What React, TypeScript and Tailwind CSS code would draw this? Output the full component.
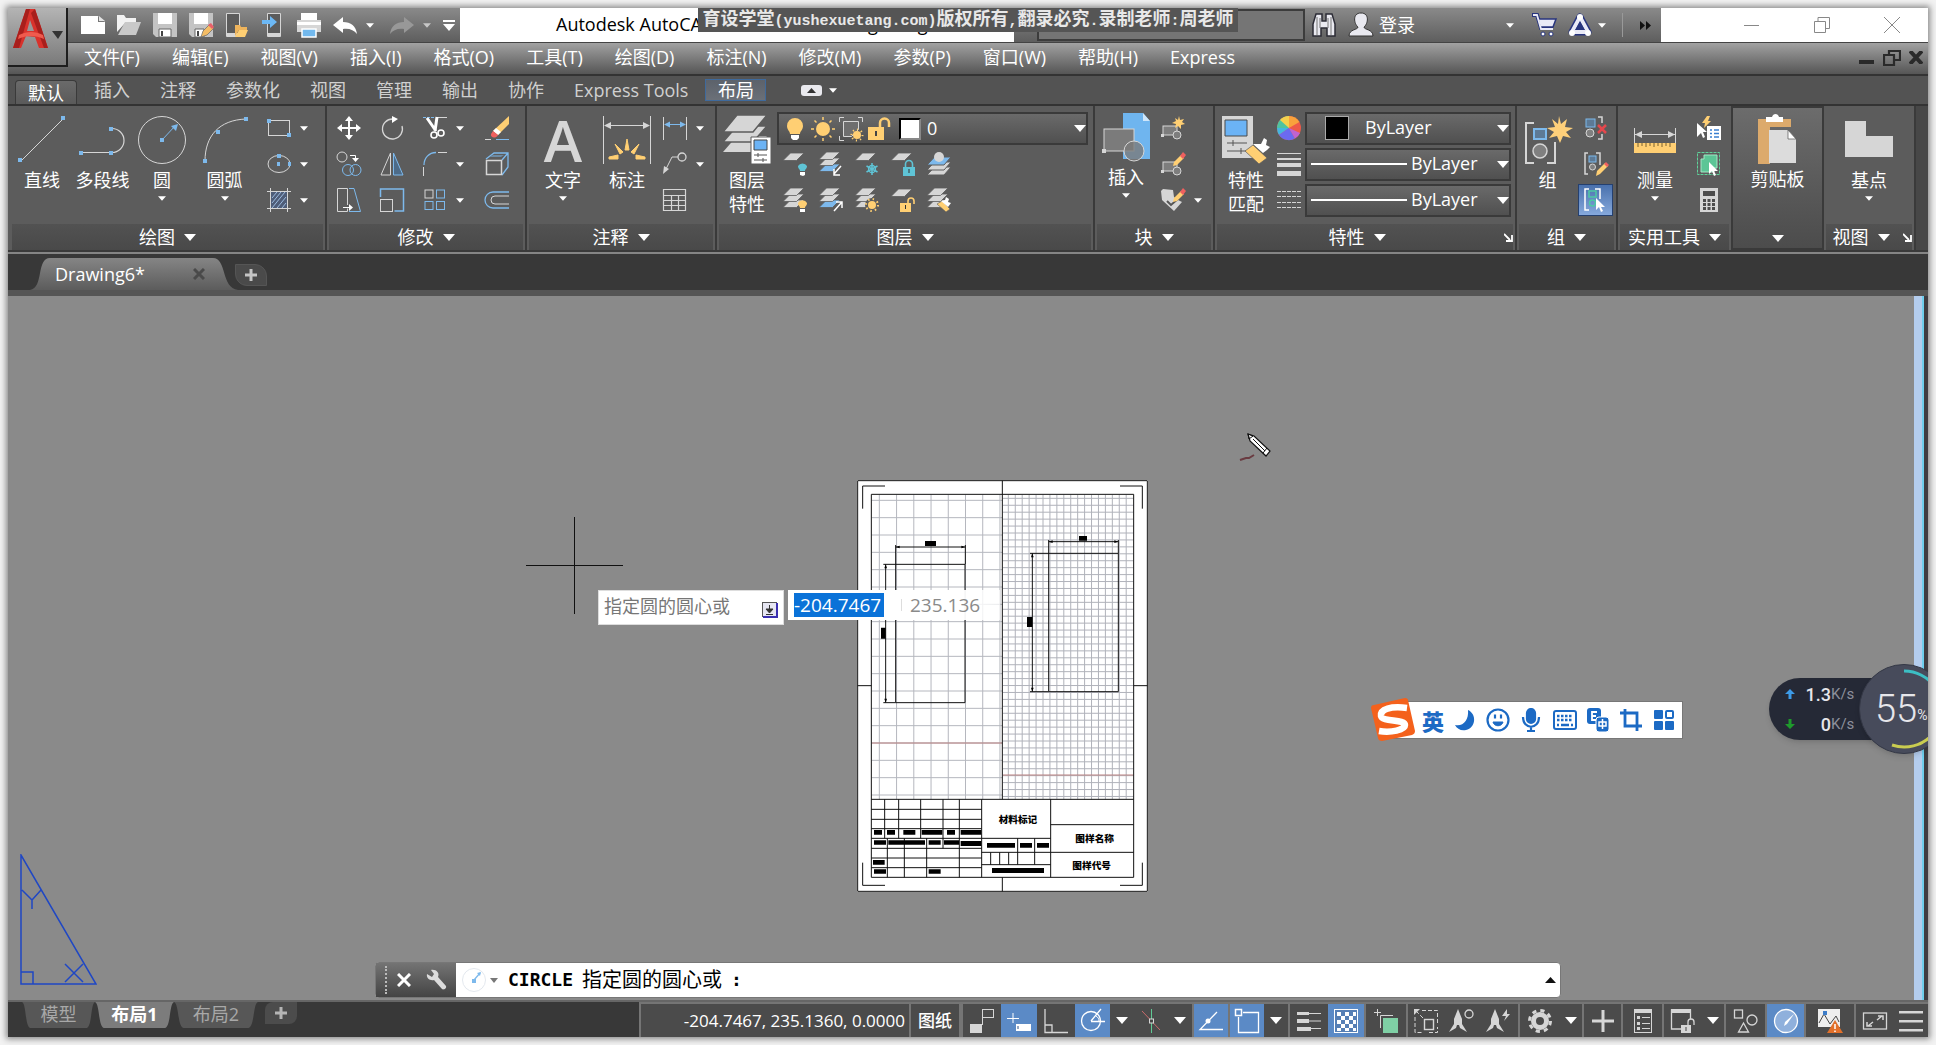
import React from 'react';

const G = '#d6d6d6';
const B = '#7db9ec';
const Y = '#ffcf73';

const sheet = (y: number, fill: string) => <path d={`M7.500 ${y}H21l-7.500 7.500H0z`} fill={fill} stroke="#5c5c5c" strokeWidth=".8" />;
const layers = <>{sheet(12, G)}{sheet(6, G)}{sheet(0, G)}</>;
const pencil = <><path d="M12 14l1-4 7-7 3 3-7 7z" fill={Y} /><path d="M19 4l3-4 3 3-3 4z" fill="#f0605f" /></>;
const cursor = <path d="M12 10v12l3-3 2 5 2-1-2-4h4z" fill="#fff" />;
const blockShape = (
  <>
    <rect x="2" y="10" width="14" height="9" fill="#7d7d7d" stroke={G} />
    <circle cx="16" cy="19" r="4" fill="#7d7d7d" stroke={G} />
    <rect x="0" y="18" width="3" height="3" fill={G} />
  </>
);

// 24x24 drawings, keyed by command
const ICONS: Record<string, React.ReactNode> = {
  rect: <><rect x="1.500" y="4.500" width="21" height="15" fill="none" stroke={G} /><path d="M0 3h4v4H0zM20 17h4v4h-4z" fill={B} /></>,
  ellipse: <><ellipse cx="12" cy="12" rx="11" ry="8.500" fill="none" stroke={G} /><path d="M10 2h4v4h-4zM21 10h3v4h-3zM10 10h3v4h-3z" fill={B} /></>,
  hatch: <><path d="M3 3h18v18H3z" fill="#4f5d78" /><path d="M5 10l5-6M5 15l9-11M5 20L18 4M10 20l9-11M15 20l4-5" stroke="#9dbce0" fill="none" /><path d="M0 3.500h24M0 20.500h24M3.500 0v24M20.500 0v24" stroke={G} /></>,
  move: <path d="M12 0l4 5h-3v6h6V8l5 4-5 4v-3h-6v6h3l-4 5-4-5h3v-6H5v3l-5-4 5-4v3h6V5H8z" fill="#fff" />,
  rotate: <><path d="M13 3a10 10 0 1 0 9 7" fill="none" stroke={G} strokeWidth="1.300" /><path d="M12 0l6 3-6 4z" fill="#fff" /></>,
  trim: <><path d="M0 1.500h11" stroke={B} strokeDasharray="3 1" /><path d="M13 1.500h11" stroke={G} /><path d="M4 2l9 13M14 1l-2 14" stroke="#fff" strokeWidth="3" /><circle cx="11" cy="19" r="3" fill="none" stroke="#fff" strokeWidth="1.600" /><circle cx="18" cy="17" r="3" fill="none" stroke="#fff" strokeWidth="1.600" /></>,
  erase: <><path d="M24 0v8L13 19l-5-4z" fill={Y} /><path d="M11 12l5 4-3 3-5-4z" fill="#fff" /><path d="M8 15l5 4c-2 4-8 3-7-1z" fill="#f0605f" /><path d="M0 23.500h6" stroke={G} /><path d="M11 23.500h13" stroke={B} /></>,
  copy: <><circle cx="5" cy="5" r="5" fill="none" stroke={G} /><path d="M13 3.500h5.500V8" fill="none" stroke="#fff" /><path d="M15 6h7l-3.500 4z" fill="#fff" /><circle cx="11" cy="18" r="5.500" fill="none" stroke={B} /><circle cx="18.500" cy="18" r="5.500" fill="none" stroke={B} /></>,
  mirror: <><path d="M10.500 1v22H1z" fill="none" stroke={G} /><path d="M13.500 1v22H23z" fill="#4d6b88" stroke={B} /></>,
  fillet: <><path d="M1 13C1 6 6 .5 13 .5" fill="none" stroke={B} strokeWidth="1.300" /><path d="M15 .5h9M.5 15v9" stroke={G} /></>,
  solid: <><path d="M1 7l8-6h14v14l-6 8M17 8l6-7" fill="none" stroke={B} strokeWidth="1.300" /><path d="M5 5l3-2h11l-3 2z" fill={B} opacity=".5" /><rect x="1.500" y="8.500" width="15" height="14" fill="none" stroke={G} strokeWidth="1.500" /></>,
  stretch: <><path d="M10.500 17v-16.500H.5v23h10v-3" fill="none" stroke={G} /><path d="M12 .5h5l6.500 23H12" fill="none" stroke={B} /><path d="M6 19h6v-3l4 3.500-4 3.500v-3H6z" fill="#fff" /></>,
  scale: <><path d="M.5 9V1h23v22h-9" fill="none" stroke={B} strokeWidth="1.500" /><rect x=".5" y="11.500" width="12" height="12" fill="none" stroke={G} /></>,
  array: <><rect x="2" y="2" width="8" height="8" fill="none" stroke={G} /><rect x="13.500" y="2" width="8" height="8" fill="none" stroke={B} /><rect x="2" y="13.500" width="8" height="8" fill="none" stroke={B} /><rect x="13.500" y="13.500" width="8" height="8" fill="none" stroke={B} /></>,
  offset: <><path d="M24 4H8a8 8 0 0 0 0 16h16" fill="none" stroke={B} strokeWidth="1.300" /><path d="M24 8H10a4 4 0 0 0 0 8h14" fill="none" stroke={G} /></>,
  dimlin: <><path d="M.5 1v23M23.500 1v23" stroke={G} /><path d="M2 8.500h20" stroke={B} /><path d="M1 8.500l6-3v6zM23 8.500l-6-3v6z" fill={B} /></>,
  leader: <><circle cx="19" cy="5" r="4" fill="none" stroke={G} strokeWidth="1.300" /><path d="M15 5H9L3 17" fill="none" stroke={G} /><path d="M0 22l1-8 5 3z" fill={G} /></>,
  table: <><path d="M.5 1.500h22v21H.5zM.5 7.500h22M.5 12.500h22M.5 17.500h22M8.500 7v15M15.500 7v15" fill="none" stroke={G} strokeWidth="1.200" /></>,
  layOff: <>{sheet(1, G)}<path d="M15 14a5 4.500 0 0 1 9 0c0 3-2 3-2 5h-5c0-2-2-2-2-5z" fill="#5fc4d6" /><path d="M17 20h5v3l-2 1-3-1z" fill="#fff" /></>,
  layIso: <>{sheet(12, B)}{sheet(6, G)}{sheet(0, G)}<path d="M22 14l-7 8m0-5v6h6" stroke="#fff" fill="none" strokeWidth="1.500" /></>,
  layFreeze: <>{sheet(1, G)}<path d="M17 11v12M11.500 14l11 6M22.500 14l-11 6" stroke="#5fc4d6" strokeWidth="1.500" /><circle cx="17" cy="17" r="3.500" fill="none" stroke="#5fc4d6" strokeWidth="1.300" /></>,
  layLock: <>{sheet(1, G)}<rect x="12" y="15" width="12" height="9" fill="#5fc4d6" /><path d="M14.500 15v-3a3.500 3.500 0 0 1 7 0v3" fill="none" stroke="#5fc4d6" strokeWidth="1.600" /><path d="M17.500 17h1v4h-1z" fill="#333" /></>,
  layCur: <><path d="M7.500 15H24l-7 8H0z" fill={G} stroke="#5c5c5c" /><path d="M7.500 10H24l-7 8H0z" fill={G} stroke="#5c5c5c" /><path d="M7.500 5H24l-7 8H0z" fill={B} stroke="#5c5c5c" /><circle cx="12" cy="5" r="5" fill={G} /></>,
  layOn: <>{layers}<path d="M15 15a5 5 0 0 1 9 0c0 3-2 3-2 5h-5c0-2-2-2-2-5z" fill={Y} /><path d="M17 21h5v3h-5z" fill="#fff" /></>,
  layUniso: <>{sheet(12, B)}{sheet(6, G)}{sheet(0, G)}<path d="M15 23l8-9m-6 0h6v6" stroke="#fff" fill="none" strokeWidth="1.500" /></>,
  layThaw: <>{layers}<circle cx="17" cy="17" r="7" fill="#5c5c5c" /><circle cx="17" cy="17" r="4" fill={Y} /><circle cx="17" cy="17" r="6" fill="none" stroke={Y} strokeWidth="2" strokeDasharray="1.500 3.200" /></>,
  layUnlock: <>{sheet(1, G)}<rect x="9" y="15" width="11" height="9" fill={Y} /><path d="M17 15v-2a3 3 0 0 1 6 0v3" fill="none" stroke={Y} strokeWidth="1.600" /><path d="M14 17h1v4h-1z" fill="#333" /></>,
  layMatch: <>{layers}<path d="M10 16l5-3 8 8-4 3z" fill={Y} stroke="#5c5c5c" strokeWidth=".6" /><path d="M14 13l4-1 1-3 3 2-1 3 3 1-3 4z" fill="#fff" /></>,
  bulb: <><path d="M4 9a8 8 0 0 1 16 0c0 4-3 5-3 8H7c0-3-3-4-3-8z" fill={Y} /><path d="M8 18h8v3l-2 2h-4l-2-2z" fill="#fff" /></>,
  sun: <><circle cx="12" cy="12" r="7" fill={Y} /><path d="M12 0v3M12 21v3M0 12h3M21 12h3M3.500 3.500l2 2M18.500 18.500l2 2M3.500 20.500l2-2M18.500 5.500l2-2" stroke={Y} strokeWidth="1.500" /></>,
  vpsun: <><path d="M4.500 4.500h15v8l-7 7h-8z" fill="#6e6e6e" stroke={G} /><path d="M.5 5V.5H5M19 .5h4.500V5M.5 19v4.500H5" fill="none" stroke={G} /><circle cx="18" cy="18" r="4" fill={Y} /><circle cx="18" cy="18" r="5.500" fill="none" stroke={Y} strokeWidth="2" strokeDasharray="1.200 3" /></>,
  unlock: <><rect x="1" y="10" width="16" height="13" fill={Y} /><path d="M13 10V6a4.500 4.500 0 0 1 9 0v4" fill="none" stroke={Y} strokeWidth="2.500" /><path d="M8 14h2v5H8z" fill="#444" /></>,
  blkNew: <>{blockShape}<path d="M18 0l1 4 4-1-2 3 3 2-4 1 0 4-3-3-3 2 1-4-4-1 4-2-1-3 3 2z" fill={Y} /></>,
  blkEdit: <>{blockShape}{pencil}</>,
  blkAttr: <><path d="M0 3l2-2 10 1 1 7 4 3 4 2-8 9L1 12z" fill={G} /><path d="M6 13l4 4 8-7" fill="none" stroke="#555" strokeWidth="2" />{pencil}</>,
  wheel: <><circle cx="12" cy="12" r="12" fill="#ee5a48" /><path d="M12 12V0a12 12 0 0 1 10.400 6z" fill="#f9a23c" /><path d="M12 12L0 12A12 12 0 0 1 12 0z" fill="#4fc3a0" /><path d="M12 12L3 4a12 12 0 0 1 9-4z" fill="#f5d04d" /><path d="M12 12L2 19a12 12 0 0 1-2-7z" fill="#44b6e0" /><path d="M12 12l6 10.400A12 12 0 0 1 2 19z" fill="#6b6af0" /><path d="M12 12l6 10.400A12 12 0 0 0 23 17z" fill="#c063cf" /></>,
  lweight: <path d="M0 1h24v1H0zM0 6h24v2H0zM0 11h24v4H0zM0 19h24v5H0z" fill={G} />,
  ltype: <path d="M0 3.500h24M0 8.500h24M0 14.500h24M0 19.500h24" stroke={G} strokeDasharray="4 1" />,
  grpDel: <><rect x="2" y="3" width="9" height="8" fill="#5d7a96" stroke={B} /><circle cx="6" cy="17" r="4" fill="#808080" stroke={G} /><path d="M14 1h4v6M18 18v5h-4" fill="none" stroke={G} strokeWidth="1.500" /><path d="M14 9l8 8m0-8l-8 8" stroke="#e5484d" strokeWidth="2.500" /></>,
  grpEdit: <><path d="M4 1H1v21h3M12 1h4v12" fill="none" stroke={G} strokeWidth="1.500" /><rect x="5" y="4" width="7" height="6" fill="#5d7a96" stroke={B} /><circle cx="8.500" cy="15" r="3" fill="#808080" stroke={G} /><path d="M12 24l1-5 8-8 3 3-8 8z" fill={Y} /><path d="M20 12l2-2 3 3-2 2z" fill="#f0605f" /></>,
  grpSel: <><path d="M5 1H1v21h4M11 1h5v10" fill="none" stroke="#fff" strokeWidth="1.500" /><rect x="5" y="3" width="7" height="6" fill="none" stroke="#4ec9a4" strokeWidth="1.500" /><circle cx="8.500" cy="15" r="3" fill="none" stroke="#4ec9a4" strokeWidth="1.500" />{cursor}</>,
  quick: <><rect x="10" y="10" width="14" height="14" fill="#fff" /><path d="M13 14h2M13 17.500h2M13 21h2M17 14h5M17 17.500h5M17 21h5" stroke="#3a7fd0" strokeWidth="1.500" /><path d="M0 7v14l4-4 2 5 2-1-2-5h4z" fill="#fff" /><path d="M10 0L5 7h3L7 12l7-7h-3l2-5z" fill={Y} /></>,
  selAll: <><rect x=".5" y=".5" width="22" height="22" fill="none" stroke="#5fd39a" strokeDasharray="3 1" /><path d="M4 7h3V3h13v13h-3v4H4z" fill="#5cc596" stroke="#a4e6c5" />{cursor}</>,
  calc: <><rect x="3" width="18" height="24" fill={G} /><path d="M6 3h12v5H6zM6 11h3v3H6zM10.500 11h3v3h-3zM15 11h3v3h-3zM6 15h3v3H6zM10.500 15h3v3h-3zM15 15h3v3h-3zM6 19h3v3H6zM10.500 19h3v3h-3zM15 19h3v3h-3z" fill="#4c4c4c" /></>,
  new: <><path d="M0 3h17l7 6v12H0z" fill="#fff" /><path d="M17 3v6h7z" fill="#777" /><path d="M18 3l6 5h-6z" fill="#e4e4e4" /></>,
  open: <><path d="M0 2h7l2 3h10v4H9L0 19z" fill="#f2f2f2" /><path d="M8 9h16l-5 13H1z" fill="#c9c9c9" /></>,
  save: <><path d="M0 0h24v24H3l-3-3z" fill="#c4c4c4" /><path d="M5 0h14v11H5z" fill="#fff" /><path d="M6 16h12v8H6z" fill="#fff" stroke="#666" /><path d="M8 18h2v5H8z" fill="#444" /></>,
  saveAs: <><path d="M0 0h24v24H3l-3-3z" fill="#c4c4c4" /><path d="M5 0h14v11H5z" fill="#fff" /><path d="M6 16h9v8H6z" fill="#fff" stroke="#666" /><path d="M8 18h2v5H8z" fill="#444" /><path d="M12 24l2-6 7-7 4 4-7 7z" fill="#f4bd66" stroke="#666" strokeWidth=".7" /><path d="M19 12l3-2 3 4-2 2z" fill="#e8606a" /></>,
  openWeb: <><rect x="1" width="14" height="24" rx="1" fill={G} /><rect x="2" y="1" width="12" height="19" fill="#5c5c5c" /><path d="M10 12h5l1 2h6v3h-8l-4 6z" fill="#eeb45c" /><path d="M14 17h9l-3 7h-10z" fill={Y} /></>,
  saveWeb: <><rect x="6" width="14" height="24" rx="1" fill={G} /><rect x="7" y="1" width="12" height="19" fill="#5c5c5c" /><path d="M1 7h8V3l7 6-7 6v-4H1z" fill="#6cb8f5" /></>,
  print: <><path d="M4 0h16v7H4z" fill="#fff" /><path d="M0 7h24v12H0z" fill={G} /><path d="M0 9h24v3H0z" fill="#fff" /><path d="M5 16h14v8H5z" fill="#72b9ee" stroke="#fff" strokeWidth="1.500" /></>,
  undo: <path d="M10 4v5c8 0 13 4 14 12-3-4-8-6-14-5v4L0 12z" fill="#fff" />,
  redo: <path d="M14 4v5C6 9 1 13 0 21c3-4 8-6 14-5v4l10-8z" fill="#989898" />,
  binoc: <><path d="M4 1h6v7h4V1h6l3 10v12h-8v-8H9v8H1V11z" fill="#e9e9f0" stroke="#2b2b35" strokeWidth="1.500" /><path d="M5 4v18M8 5v10M16 5v10M19 4v18" stroke="#777" /></>,
  user: <path d="M12 0c9 0 7 11 3 14 0 3 9 2 9 9H0c0-7 9-6 9-9C5 11 3 0 12 0z" fill="#e9e9f0" stroke="#333" />,
  cart: <><path d="M0 2h5l4 13h12" fill="none" stroke="#28357e" strokeWidth="4" /><path d="M6 6h18l-3 8H8z" fill="#e9eaf6" stroke="#28357e" strokeWidth="1.500" /><path d="M1 2h4l4 14h12" fill="none" stroke="#e9eaf6" strokeWidth="1.800" /><circle cx="11" cy="21" r="2" fill="#fff" stroke="#28357e" /><circle cx="19" cy="21" r="2" fill="#fff" stroke="#28357e" /></>,
  a360: <><path d="M12 4l8 15H4z" fill="none" stroke="#28357e" strokeWidth="7" strokeLinejoin="round" /><path d="M12 4l8 15H4z" fill="none" stroke="#e9eaf6" strokeWidth="4" strokeLinejoin="round" /><path d="M12 8l5 9H7z" fill="#28357e" /><circle cx="12" cy="4" r="3" fill="#fff" /><circle cx="4" cy="20" r="3" fill="#fff" /><circle cx="20" cy="20" r="3" fill="#fff" /></>,
  snap: <><rect x="12.500" y=".5" width="11" height="8" fill="none" stroke={G} /><path d="M12.500 8v8" stroke={G} /><path d="M0 15h12v9H0z" fill={G} /></>,
  dyn: <><path d="M6 4v10M0 9.500h12" stroke="#fff" /><path d="M9 15h15v7H9z" fill="#fff" /><path d="M11 17v3" stroke="#28508a" /></>,
  ortho: <><path d="M1 0v23.500h23" fill="none" stroke={G} strokeWidth="1.300" /><path d="M1 16h7v7" fill="none" stroke={G} strokeWidth="1.300" /></>,
  polar: <><circle cx="10" cy="12" r="9.500" fill="none" stroke="#fff" strokeWidth="1.300" /><path d="M10 12.500h14M10 12L20 0" stroke="#fff" strokeWidth="1.300" /><path d="M15 7c2 1 3 3 3 5" stroke="#fff" fill="none" /></>,
  iso: <><path d="M12.500 0v24" stroke="#5fc994" /><path d="M3 2l18 19" stroke="#c96a6a" /><rect x="10.500" y="10" width="4" height="4" fill="#444" stroke={G} /></>,
  otrack: <><path d="M18 3L1 20.500h23" fill="none" stroke="#fff" strokeWidth="1.300" /><circle cx="9" cy="12" r="2.500" fill="#fff" /></>,
  osnap: <><path d="M8 3.500h15.500v20H3.500V8" fill="none" stroke="#fff" strokeWidth="1.300" /><rect x=".5" y=".5" width="6" height="6" fill="none" stroke="#fff" strokeWidth="1.500" /></>,
  lwt: <><path d="M0 3h12v3H0zM0 10h12v4H0zM0 18h14v4H0z" fill={G} /><path d="M12 4.500h12M12 12h12M14 19.500h10" stroke={G} /></>,
  transp: <><rect x=".5" y=".5" width="23" height="23" fill="#567fb5" stroke="#fff" /><path d="M3 3h4v4H3zM11 3h4v4h-4zM19 3h3v4h-3zM7 7h4v4H7zM15 7h4v4h-4zM3 11h4v4H3zM11 11h4v4h-4zM19 11h3v4h-3zM7 15h4v4H7zM15 15h4v4h-4zM3 19h4v3H3zM11 19h4v3h-4zM19 19h3v3h-3z" fill="#fff" /></>,
  cycle: <><path d="M3.500 0v7M0 3.500h7" stroke={G} /><path d="M6.500 19V6.500H19" fill="none" stroke={G} /><rect x="9" y="9" width="15" height="15" fill="#7fd0a5" /></>,
  annoScale: <><path d="M8 1.500h15.500v14M1 8v15.500h8M9 9l-6-6M15 23.500h8.500V18" fill="none" stroke={G} strokeDasharray="4 2" /><path d="M0 0h6L0 6z" fill={G} /><rect x="10.500" y="10.500" width="9" height="10" fill="none" stroke={G} strokeWidth="1.400" /></>,
  annoVis: <><path d="M8 0l4 10v5l5 8-7-4-1-3H7l-1 3-7 4 5-8v-5z" fill={G} /><circle cx="19" cy="5" r="4" fill="none" stroke={G} strokeWidth="1.300" /></>,
  annoAuto: <><path d="M8 0l4 10v5l5 8-7-4-1-3H7l-1 3-7 4 5-8v-5z" fill={G} /><path d="M20 0l-5 7h4l-2 5 6-7h-3z" fill={G} /></>,
  gear: <><circle cx="12" cy="12" r="6.500" fill="none" stroke={G} strokeWidth="5" /><circle cx="12" cy="12" r="10.500" fill="none" stroke={G} strokeWidth="3" strokeDasharray="4.200 4.050" /></>,
  plus: <path d="M10.500 1h3v9.500H23v3h-9.500V23h-3v-9.500H1v-3h9.500z" fill={G} />,
  props: <><rect x="3.500" y=".5" width="17" height="23" fill="none" stroke={G} /><path d="M3 0h18v4H3z" fill={G} /><path d="M6 7h3v3H6zM6 13h3v3H6zM6 18h3v3H6zM11 8h8v1h-8zM11 14h8v1h-8zM11 19h8v1h-8z" fill={G} /></>,
  lockUi: <><path d="M10 20H.500V1h19v9" fill="none" stroke={G} strokeWidth="1.300" /><path d="M0 0h20v4H0zM10 16h10v8H10z" fill={G} /><path d="M17 16v-3a3 3 0 0 1 6 0v3" fill="none" stroke={G} strokeWidth="1.300" /><path d="M15 18v4" stroke="#444" /></>,
  isolate: <><rect x=".5" y="1" width="8" height="8" fill="none" stroke={G} strokeWidth="1.300" /><circle cx="18" cy="11" r="5" fill="none" stroke={G} strokeWidth="1.300" /><path d="M9.500 14l5 9h-10z" fill="none" stroke={G} strokeWidth="1.300" /></>,
  perf: <><circle cx="12" cy="12" r="11.500" fill="#8fb0dc" stroke="#fff" strokeWidth="1.300" /><path d="M20 5l-7 10-3 2 1-4z" fill="#fff" /></>,
  monitor: <><path d="M0 0h22v18H0z" fill="#eee" /><path d="M1 14L6 5l6 10 6-8 3 6" stroke="#444" fill="none" /><path d="M5 2h4v4H5z" fill="#3c7cc8" /><path d="M17 11l8 13H9z" fill="#e2702a" /><path d="M17 15v5M17 21.500v1.500" stroke="#fff" strokeWidth="1.500" /></>,
  clean: <><rect x=".5" y="4" width="23" height="16" fill="none" stroke={G} strokeWidth="1.300" /><path d="M14 11l5-4m-4 0h5v4M10 13l-5 4m-1-4v4h5" fill="none" stroke={G} strokeWidth="1.500" /></>,
  menu: <path d="M0 2h24v2.500H0zM0 11h24v2.500H0zM0 20h24v2.500H0z" fill={G} />,
};

const Ico = ({ name }: { name: string }) => (
  <svg className="size-6 shrink-0 overflow-visible" viewBox="0 0 24 24" aria-hidden="true">{ICONS[name]}</svg>
);

const Arrow = ({ big = false }: { big?: boolean }) => (
  <svg className={big ? 'w-3 h-[7px] shrink-0' : 'w-2 h-[5px] shrink-0'} viewBox="0 0 12 7" aria-hidden="true"><path d="M0 0h12L6 7z" fill="#fff" /></svg>
);

// 48x48 drawings for the large ribbon buttons
const BIG: Record<string, React.ReactNode> = {
  line: <><path d="M3 45L45 3" stroke={G} /><path d="M0 42h4v4H0zM43 0h4v4h-4z" fill={B} /></>,
  pline: <><path d="M2 36.500h31a12 12 0 0 0 0-24" fill="none" stroke={G} strokeWidth="1.200" /><path d="M0 35h4v4H0zM30 35h4v4h-4zM30 11h4v4h-4z" fill={B} /></>,
  circle: <><circle cx="24" cy="24" r="23.500" fill="none" stroke={G} /><path d="M24 24l13-14" stroke={B} /><path d="M40 8l-2 7-5-5zM22 22h4v4h-4z" fill={B} /></>,
  arc: <><path d="M4 45C4 20 18 4 45 3" fill="none" stroke={G} /><path d="M2 43h4v4H2zM15 14h4v4h-4zM43 1h4v4h-4z" fill={B} /></>,
  dim: <><path d="M.5 0v48M47.500 0v48M2 9.500h44" stroke={G} /><path d="M1 9.500l7-3.500v7zM47 9.500L40 6v7z" fill={G} /><path d="M24 23l2 11h-4zM12 28l8 8-3 2zM36 28l-8 8 3 2zM6 41l9-2v4H6zM42 41l-9-2v4h9z" fill={Y} stroke={Y} /></>,
  layerProps: <><path d="M14 20h30L30 36H0z" fill={G} /><path d="M14 10h30L30 26H0z" fill={G} stroke="#5c5c5c" strokeWidth="1.500" /><path d="M14-1h30L30 16H0z" fill={G} stroke="#5c5c5c" strokeWidth="1.500" /><path d="M28 21h20v27H28z" fill="#fff" stroke="#5c5c5c" /><path d="M31 24h13v10H31z" fill="#6bb3f5" stroke="#444" /><path d="M31 39h13M31 44h13M35 37v4M40 42v4" stroke="#555" /></>,
  insert: <><path d="M21 0h20l7 8v38H21z" fill="#6fb5ef" /><path d="M41 0v8h7z" fill="#cfe6fa" /><rect x="2" y="16" width="30" height="22" fill="#7b7b7b" stroke={G} /><circle cx="32" cy="38" r="10" fill="#7b7b7b" fillOpacity=".8" stroke={G} /><path d="M0 36h4v4H0z" fill={G} /></>,
  matchProps: <><path d="M0 0h31v42H0z" fill={G} /><path d="M3 4h22v16H3z" fill="#6bb3f5" stroke="#4a4a4a" /><path d="M5 27h20M5 35h20M11 24v6M19 32v6" stroke="#555" /><path d="M23 35l8-6 14 13-8 6z" fill={Y} stroke="#5c5c5c" strokeWidth=".7" /><path d="M31 28l8 0 3-6 3 2-1 5 4 2-3 3-4 3z" fill="#fff" /></>,
  group: <><path d="M10 7H2v40h8M23 47h8V26" fill="none" stroke={G} strokeWidth="2" /><rect x="10" y="13" width="12" height="10" fill="#5d7a96" stroke={B} strokeWidth="2" /><circle cx="16" cy="35" r="7" fill="#808080" stroke={G} strokeWidth="1.500" /><path d="M35 0l2 8 6-5-2 8 8 1-7 4 5 6-8-2-3 7-3-7-8 2 5-6-7-4 8-1-3-8 6 5z" fill="#ffd07a" /></>,
  measure: <><path d="M3.500 12v15M44.500 12v15M4 18.500h40" stroke={G} /><path d="M4 18.500l7-3.500v7zM44 18.500L37 15v7z" fill={G} /><path d="M3 27h42v10H3z" fill={Y} /><path d="M7 27v4M11 27v3M15 27v4M19 27v3M23 27v4M27 27v3M31 27v4M35 27v3M39 27v4" stroke="#7a6230" /></>,
  paste: <><path d="M4 4h33v8H16v37H4z" fill="#dcaa6c" /><path d="M12 2h6c1-4 6-4 7 0h4v5H12z" fill="#fff" /><path d="M15 15h19l8 9v24H15z" fill="#dcdcdc" /><path d="M34 15v9h8z" fill="#fff" stroke="#555" strokeWidth=".7" /></>,
  base: <path d="M0 5h21v15h27v21H0z" fill={G} />,
};

interface BigProps {
  icon?: string;
  labels: string[];
  width: string;
  arrow?: boolean;
  tight?: boolean;
}

const BigButton: React.FC<BigProps> = ({ icon, labels, width, arrow, tight }) => (
  <button className={`${width} ${tight ? 'pt-[7px]' : 'pt-[10px]'} shrink-0 flex flex-col items-center`}>
    {icon
      ? <svg className="size-12 overflow-visible" viewBox="0 0 48 48" aria-hidden="true">{BIG[icon]}</svg>
      : <span className="text-[58px] leading-[48px] h-12 font-semibold text-[#d6d6d6]" aria-hidden="true">A</span>}
    <span className="mt-1 leading-6">
      {labels.map((l) => <span key={l} className="block">{l}</span>)}
    </span>
    {arrow && <span className="mt-1 flex"><Arrow /></span>}
  </button>
);

const Small = ({ icon, arrow, title }: { icon: string; arrow?: boolean; title: string }) => (
  <button className="h-9 flex items-center gap-[9px]" aria-label={title}>
    <Ico name={icon} />
    {arrow && <Arrow />}
  </button>
);

const Launcher = () => (
  <svg className="size-[9px]" viewBox="0 0 9 9" aria-hidden="true"><path d="M0 1l6 6M8 2v6H2" fill="none" stroke="#fff" strokeWidth="1.800" /></svg>
);

const Panel = ({ title, width, launcher, children }: { title: string; width: string; launcher?: boolean; children: React.ReactNode }) => (
  <section className={`${width} shrink-0 border-r-2 border-[#3a3a3a] flex flex-col`}>
    <div className="h-[118px] flex">{children}</div>
    <button className={`relative mx-[2px] h-[26px] bg-linear-to-b from-[#525252] to-[#494949] flex items-center justify-center gap-[9px] leading-6 ${launcher ? 'pr-4' : ''}`}>
      {title}
      <Arrow big />
      {launcher && <span className="absolute right-0 top-[9px]"><Launcher /></span>}
    </button>
  </section>
);

const Combo = ({ label, children, value, width }: { label: string; children?: React.ReactNode; value: string; width: string }) => (
  <div className={`${width} h-[33px] border-2 border-[#3a3a3a] bg-linear-to-b from-[#6a6a6a] to-[#505050] flex items-center`}>
    {children}
    <select aria-label={label} defaultValue={value} className="flex-1 min-w-0 appearance-none bg-transparent text-white outline-none leading-6 pb-[2px]">
      <option>{value}</option>
    </select>
    <span className="flex pointer-events-none"><Arrow big /></span>
  </div>
);

const MENUS = ['文件(F)', '编辑(E)', '视图(V)', '插入(I)', '格式(O)', '工具(T)', '绘图(D)', '标注(N)', '修改(M)', '参数(P)', '窗口(W)', '帮助(H)', 'Express'];
const TABS = ['插入', '注释', '参数化', '视图', '管理', '输出', '协作', 'Express Tools'];

const TitleBar = () => (
  <header className="relative h-[34px] flex items-stretch bg-linear-to-b from-[#8a8a8a] to-[#5e5e5e]">
    <div className="w-[394px] shrink-0 pl-[15px] flex items-center">
      {[['new', '新建'], ['open', '打开'], ['save', '保存'], ['saveAs', '另存为'], ['openWeb', '从 Web 打开'], ['saveWeb', '保存到 Web'], ['print', '打印']].map(([n, t]) => (
        <button key={n} className="w-9" aria-label={t}><Ico name={n} /></button>
      ))}
      <button aria-label="放弃"><Ico name="undo" /></button>
      <span className="ml-[9px] mr-4 flex"><Arrow /></span>
      <button aria-label="重做"><Ico name="redo" /></button>
      <span className="ml-[9px] mr-3 flex opacity-60"><Arrow /></span>
      <svg className="w-3 h-[11px]" viewBox="0 0 12 11" aria-hidden="true"><path d="M0 0h12v2H0zM0 4h12l-6 7z" fill="#fff" /></svg>
    </div>
    <div className="w-[554px] shrink-0 bg-white text-black flex items-center pl-24 pb-[2px] leading-6 whitespace-pre">
      <span className="w-[252px]">Autodesk AutoCAD 2020</span>
      <span>Drawing6.dwg</span>
    </div>
    <div className="ml-[23px] flex-1 my-px border-2 border-[#3c3c3c] bg-[#757575] flex">
      <input aria-label="搜索" className="flex-1 min-w-0 bg-transparent outline-none" />
    </div>
    <div className="w-[356px] shrink-0 pl-[7px] flex items-center">
      <button aria-label="查找"><Ico name="binoc" /></button>
      <button className="ml-[13px] flex items-center gap-[6px] leading-6"><Ico name="user" />登录</button>
      <span className="ml-[91px] flex"><Arrow /></span>
      <button className="ml-[18px]" aria-label="应用商店"><Ico name="cart" /></button>
      <button className="ml-3" aria-label="Autodesk"><Ico name="a360" /></button>
      <span className="ml-[6px] flex"><Arrow /></span>
      <span className="ml-4 w-px h-6 bg-[#999]" />
      <svg className="ml-[17px] w-[11px] h-[9px]" viewBox="0 0 11 9" aria-hidden="true"><path d="M0 0l5 4.500L0 9zM6 0l5 4.500L6 9z" fill="#111" /></svg>
    </div>
    <div className="w-[267px] shrink-0 bg-white pl-[83px] flex items-center gap-[54px]">
      <button aria-label="最小化"><svg className="size-4" viewBox="0 0 16 16"><path d="M0 8.500h15" stroke="#888" /></svg></button>
      <button aria-label="还原"><svg className="size-4" viewBox="0 0 16 16"><path d="M.5 4.500h11v11H.5zM4 4V.5h11.500v11H12" fill="none" stroke="#888" /></svg></button>
      <button aria-label="关闭"><svg className="size-4" viewBox="0 0 16 16"><path d="M0 0l16 16M16 0L0 16" stroke="#888" /></svg></button>
    </div>
    {/* recorder caption lies over the title */}
    <div className="absolute left-[632px] top-0 h-6 w-[540px] bg-[#555] text-[#e8e8e8] font-bold leading-6 text-center whitespace-nowrap font-['Liberation_Mono','Noto_Sans_CJK_SC',monospace]">
      育设学堂<span className="text-[15px]">(yushexuetang.com)</span>版权所有<span className="text-[15px]">,</span>翻录必究<span className="text-[15px]">.</span>录制老师<span className="text-[15px]">:</span>周老师
    </div>
  </header>
);

const Ribbon = () => (
  <div className="h-[146px] shrink-0 pl-[2px] bg-[#5c5c5c] flex border-b-2 border-[#3a3a3a] overflow-hidden">
    <Panel title="绘图" width="w-[317px]">
      <span className="w-[7px]" />
      <BigButton icon="line" labels={['直线']} width="w-[50px]" />
      <BigButton icon="pline" labels={['多段线']} width="w-[71px]" />
      <BigButton icon="circle" labels={['圆']} width="w-[48px]" arrow />
      <BigButton icon="arc" labels={['圆弧']} width="w-[77px]" arrow />
      <div className="pl-1 pt-1">
        <Small icon="rect" title="矩形" arrow />
        <Small icon="ellipse" title="椭圆" arrow />
        <Small icon="hatch" title="图案填充" arrow />
      </div>
    </Panel>
    <Panel title="修改" width="w-[200px]">
      <div className="pl-[10px] pt-1 grid grid-cols-[43px_43px_62px_24px] content-start">
        <Small icon="move" title="移动" />
        <Small icon="rotate" title="旋转" />
        <Small icon="trim" title="修剪" arrow />
        <Small icon="erase" title="删除" />
        <Small icon="copy" title="复制" />
        <Small icon="mirror" title="镜像" />
        <Small icon="fillet" title="圆角" arrow />
        <Small icon="solid" title="分解" />
        <Small icon="stretch" title="拉伸" />
        <Small icon="scale" title="缩放" />
        <Small icon="array" title="阵列" arrow />
        <Small icon="offset" title="偏移" />
      </div>
    </Panel>
    <Panel title="注释" width="w-[190px]">
      <BigButton labels={['文字']} width="w-[72px]" arrow />
      <BigButton icon="dim" labels={['标注']} width="w-[56px]" />
      <div className="pl-2 pt-1">
        <Small icon="dimlin" title="线性" arrow />
        <Small icon="leader" title="引线" arrow />
        <Small icon="table" title="表格" />
      </div>
    </Panel>
    <Panel title="图层" width="w-[378px]">
      <BigButton icon="layerProps" labels={['图层', '特性']} width="w-[60px]" />
      <div className="pt-[6px]">
        <Combo label="图层" value="0" width="w-[311px]">
          <span className="pl-1 flex gap-1"><Ico name="bulb" /><Ico name="sun" /><Ico name="vpsun" /><Ico name="unlock" /></span>
          <span className="ml-2 mr-[6px] w-[22px] h-[22px] bg-white border-2 border-black border-r-[#888] border-b-[#888]" />
        </Combo>
        <div className="pl-[6px] pt-px grid grid-cols-[36px_36px_36px_36px_36px]">
          <Small icon="layOff" title="关" />
          <Small icon="layIso" title="隔离" />
          <Small icon="layFreeze" title="冻结" />
          <Small icon="layLock" title="锁定" />
          <Small icon="layCur" title="置为当前" />
          <Small icon="layOn" title="打开所有图层" />
          <Small icon="layUniso" title="取消隔离" />
          <Small icon="layThaw" title="解冻所有图层" />
          <Small icon="layUnlock" title="解锁" />
          <Small icon="layMatch" title="匹配图层" />
        </div>
      </div>
    </Panel>
    <Panel title="块" width="w-[120px]">
      <BigButton icon="insert" labels={['插入']} width="w-[62px]" arrow tight />
      <div className="pl-1 pt-1">
        <Small icon="blkNew" title="创建块" />
        <Small icon="blkEdit" title="编辑块" />
        <Small icon="blkAttr" title="编辑属性" arrow />
      </div>
    </Panel>
    <Panel title="特性" width="w-[302px]" launcher>
      <BigButton icon="matchProps" labels={['特性', '匹配']} width="w-[62px]" />
      <div className="pt-1">
        <div className="h-9 flex items-center gap-1">
          <Ico name="wheel" />
          <Combo label="对象颜色" value="ByLayer" width="w-[206px]">
            <span className="ml-[18px] mr-4 size-6 bg-black border border-[#aaa]" />
          </Combo>
        </div>
        <div className="h-9 flex items-center gap-1">
          <Ico name="lweight" />
          <Combo label="线宽" value="ByLayer" width="w-[206px]">
            <span className="ml-1 mr-1 w-24 h-[2px] bg-white" />
          </Combo>
        </div>
        <div className="h-9 flex items-center gap-1">
          <Ico name="ltype" />
          <Combo label="线型" value="ByLayer" width="w-[206px]">
            <span className="ml-1 mr-1 w-24 h-[2px] bg-white" />
          </Combo>
        </div>
      </div>
    </Panel>
    <Panel title="组" width="w-[101px]">
      <BigButton icon="group" labels={['组']} width="w-[61px]" />
      <div className="pt-1">
        <button className="w-[35px] h-9 flex items-center justify-center" aria-label="解除编组"><Ico name="grpDel" /></button>
        <button className="w-[35px] h-9 flex items-center justify-center" aria-label="组编辑"><Ico name="grpEdit" /></button>
        <button className="w-[35px] h-8 mt-[2px] flex items-center justify-center border border-[#25406f] bg-linear-to-b from-[#4a71ad] to-[#86a9dc]" aria-label="启用组选择"><Ico name="grpSel" /></button>
      </div>
    </Panel>
    <Panel title="实用工具" width="w-[115px]">
      <BigButton icon="measure" labels={['测量']} width="w-[74px]" arrow />
      <div className="pl-[5px] pt-1">
        <Small icon="quick" title="快速选择" />
        <Small icon="selAll" title="全部选择" />
        <Small icon="calc" title="快速计算器" />
      </div>
    </Panel>
    <section className="w-[91px] shrink-0 border-2 border-[#3a3a3a] border-l-0 bg-linear-to-b from-[#6c6c6c] to-[#4c4c4c] flex flex-col items-center justify-between pb-[6px]">
      <BigButton icon="paste" labels={['剪贴板']} width="w-[87px]" tight />
      <Arrow big />
    </section>
    <Panel title="视图" width="w-[92px]" launcher>
      <BigButton icon="base" labels={['基点']} width="w-[90px]" arrow />
    </Panel>
    <div className="flex-1 bg-[#474747]" />
  </div>
);

const vLines = (from: number, to: number, step: number, y1: number, y2: number) => {
  let d = '';
  for (let x = from; x < to; x += step) d += `M${x} ${y1}V${y2}`;
  return d;
};
const hLines = (from: number, to: number, step: number, x1: number, x2: number) => {
  let d = '';
  for (let y = from; y < to; y += step) d += `M${x1} ${y}H${x2}`;
  return d;
};

const Sheet = () => (
  <svg className="absolute left-[849px] top-[184px] w-[291px] h-[412px] bg-white" viewBox="51 30 873 1236" aria-label="布局1 图纸">
    <g fill="none" stroke="#111" strokeWidth="3">
      <g stroke="#b5b7be" strokeWidth="3">
        <path d={vLines(118, 480, 51.7, 74, 988) + hLines(91, 985, 52, 95, 487)} />
        <path d={vLines(505, 875, 20.8, 74, 988) + hLines(85, 985, 20.8, 489, 880)} stroke="#b0b2ba" />
      </g>
      <path d="M95 819H487M489 915H880" stroke="#b98080" />
      <path d="M53 32H922V1264H53zM94 73H881V1222H94z" />
      <path d="M68 116V48H135M840 48H907V116M68 1178V1246H135M840 1246H907V1178M487 32V988M487 1222V1264M53 647H94M881 647H922" />
      <path d="M167 225V698H375V283H130M376 225V283M167 231H376M137 283V698M130 698H167" />
      <path d="M626 210V665H835V250H570M835 210V250M626 215H835M577 250V665M570 665H626" />
      <path d="M94 988H881M425 988V1222M632 988V1222M632 1064H881M632 1147H881M425 1105H632M425 1147H632M425 1184H632M533 1105V1184M584 1105V1184M452 1147V1184M479 1147V1184M506 1147V1184" />
      <path d="M94 1018H425M94 1048H425M94 1076H425M94 1105H425M94 1135H425M94 1164H425M94 1193H425M134 988V1105M176 988V1105M242 988V1105M309 988V1105M142 1105V1222M193 1105V1222M260 1105V1222M309 1105V1135M358 988V1222" />
    </g>
    <path d="M255 213h33v15h-33zM717 198h24v14h-24zM123 473h14v33h-14zM561 441h16v30h-16z" />
    <path d="M102 1080h24v14h-24zM141 1080h24v14h-24zM190 1080h36v14h-36zM245 1080h62v14h-62zM321 1080h24v14h-24zM362 1080h62v14h-62zM102 1111h36v13h-36zM145 1111h110v13H145zM266 1111h36v13h-36zM312 1111h45v13h-45zM362 1113h62v15h-62zM99 1170h35v14H99zM102 1198h36v13h-36zM266 1198h36v13h-36zM441 1119h84v14h-84zM540 1119h36v14h-36zM591 1119h36v14h-36zM456 1194h156v15H456z" />
    <path d="M167 231l12-4v8zM376 231l-12-4v8zM137 283l-4 12h8zM137 698l-4-12h8zM626 215l12-4v8zM835 215l-12-4v8zM577 250l-4 12h8zM577 665l-4-12h8z" />
    <g className="font-['Noto_Sans_CJK_SC',sans-serif] font-black text-[29px]">
      <text x="476" y="1059">材料标记</text>
      <text x="706" y="1116">图样名称</text>
      <text x="697" y="1197">图样代号</text>
    </g>
  </svg>
);

const ImeBar = () => (
  <div className="absolute right-[245px] top-[405px] h-[38px] w-[292px] bg-white border border-[#777] pl-[30px] pr-[6px] flex items-center justify-between text-[#1c6ac4]">
    <svg className="absolute -left-[21px] -top-[4px] w-11 h-[43px]" viewBox="0 0 44 43" aria-hidden="true">
      <path d="M3 7L34 0c2 0 3 1 3 2l7 31c0 2-1 3-3 4L11 43c-2 0-4-1-4-3L0 10c0-2 1-3 3-3z" fill="#f4611c" />
      <path d="M36 10C20 8 9 11 10 18c1 6 24 3 24 9 0 5-14 8-26 6" fill="none" stroke="#fff" strokeWidth="6.500" />
    </svg>
    <button className="text-[22px] leading-7 font-black font-['Noto_Sans_CJK_SC',sans-serif]">英</button>
    <button aria-label="半角"><svg className="size-6" viewBox="0 0 24 24"><path d="M15 2c9 4 8 18-2 20-5 1-9-1-11-5 8 2 14-5 13-15z" fill="currentColor" /></svg></button>
    <button aria-label="表情"><svg className="size-6" viewBox="0 0 24 24" fill="none" stroke="currentColor" strokeWidth="2.200"><circle cx="12" cy="12" r="10.500" /><path d="M7 14c1 5 9 5 10 0z" fill="currentColor" strokeWidth="1" /><path d="M9 6.500v4M15 6.500v4" /></svg></button>
    <button aria-label="语音"><svg className="size-6" viewBox="0 0 24 24" fill="none" stroke="currentColor" strokeWidth="2.200"><rect x="8" y="1" width="8" height="14" rx="4" fill="currentColor" /><path d="M4 9c0 13 16 13 16 0M12 18v5M8 23h8" /></svg></button>
    <button aria-label="软键盘"><svg className="size-6" viewBox="0 0 24 24" fill="none" stroke="currentColor" strokeWidth="2"><rect x="1" y="3" width="22" height="18" rx="2" /><path d="M4 8h16M4 12h16" strokeDasharray="2.500 1.500" strokeWidth="2.500" /><path d="M4 17h2M8 17h8M18 17h2" strokeWidth="2.500" /></svg></button>
    <button aria-label="翻译"><svg className="size-6" viewBox="0 0 24 24"><rect x="1" y="0" width="14" height="16" rx="3" fill="currentColor" /><path d="M11 4H6v8h5M6 8h4" fill="none" stroke="#fff" strokeWidth="1.800" /><rect x="10" y="9" width="13" height="15" rx="3" fill="currentColor" stroke="#fff" /><path d="M13 14h7v4h-7zM16.500 11v10" fill="none" stroke="#fff" strokeWidth="1.500" /></svg></button>
    <button aria-label="截图"><svg className="size-6" viewBox="0 0 24 24" fill="none" stroke="currentColor" strokeWidth="2.800"><path d="M6 1v17h17M1 5h17v18" /></svg></button>
    <button aria-label="工具箱"><svg className="size-6" viewBox="0 0 24 24" fill="currentColor"><rect x="2" y="2" width="9" height="9" rx="1" /><rect x="14" y="3" width="7" height="7" rx="1" fill="none" stroke="currentColor" strokeWidth="2" /><rect x="2" y="13" width="9" height="9" rx="1" /><rect x="13" y="13" width="9" height="9" rx="1" /></svg></button>
  </div>
);

const SpeedWidget = () => (
  <div className="absolute -right-[21px] top-[368px] w-[180px] h-[90px] flex items-center font-['Roboto',sans-serif]">
    <div className="w-[130px] h-[62px] rounded-l-full bg-[#252936] shadow-md pl-4 flex flex-col justify-between py-[4px] text-[#e6e6ea]">
      <div className="flex items-center h-6">
        <svg className="w-[10px] h-[10px]" viewBox="0 0 10 10"><path d="M5 0l5 5H6.500v5h-3V5H0z" fill="#3d9be8" /></svg>
        <span className="w-9 text-right font-medium">1.3</span><span className="text-[15px] text-[#8d909c]">K/s</span>
      </div>
      <div className="flex items-center h-6">
        <svg className="w-[10px] h-[10px]" viewBox="0 0 10 10"><path d="M5 10l5-5H6.500V0h-3v5H0z" fill="#1f9a2c" /></svg>
        <span className="w-9 text-right font-medium">0</span><span className="text-[15px] text-[#8d909c]">K/s</span>
      </div>
    </div>
    <div className="-ml-10 relative size-[90px] shrink-0 rounded-full bg-[#474b5b] border border-[#343846] shadow-md pl-[15px] flex items-center text-[#e6e6ea]">
      <svg className="absolute inset-0" viewBox="0 0 88 88" aria-hidden="true"><path d="M44 6a38 38 0 0 1 31 16" fill="none" stroke="#3cbfc4" strokeWidth="3" /><path d="M32 80a38 38 0 0 0 40-10" fill="none" stroke="#c9cc50" strokeWidth="3" /></svg>
      <span className="text-[38px] leading-10 font-light">55</span><span className="text-[14px] pt-3">%</span>
    </div>
  </div>
);

const Canvas = () => (
  <main className="relative flex-1 min-h-0 overflow-hidden bg-[#8a8a8a] flex justify-end">
    <div className="w-[10px] bg-[#b4cdee] border-r-2 border-[#6fd0ee]" />
    <div className="w-1 bg-[#3f3d42]" />
    <Sheet />
    <svg className="absolute left-[518px] top-[221px] w-[97px] h-[97px]" viewBox="0 0 97 97" aria-hidden="true"><path d="M48.500 0v97M0 48.500h97" stroke="#111" /></svg>
    <div className="absolute left-[590px] top-[294px] w-[186px] h-[35px] bg-white border border-[#ddd] pl-[5px] pr-[5px] flex items-center justify-between text-[#777]">
      <span className="leading-6 pb-1">指定圆的圆心或</span>
      <button aria-label="选项" className="mt-1"><svg className="size-4" viewBox="0 0 16 16"><rect x=".5" y=".5" width="14" height="14" fill="#e6e6f2" stroke="#555" /><path d="M15 1v14H1" fill="none" stroke="#3a2fb0" strokeWidth="2" /><path d="M7.500 3v5M4 7h7l-3.500 4zM4 12.500h7" fill="#333" stroke="#333" /></svg></button>
    </div>
    <div className="absolute left-[780px] top-[294px] w-[212px] h-[30px] bg-linear-to-r from-white from-80% to-white/70 pl-[6px] flex items-center text-[19px]">
      <input aria-label="X" defaultValue="-204.7467" className="w-[90px] h-6 bg-[#0a72d8] text-white outline-none leading-6" />
      <span className="ml-[17px] w-px h-3 bg-[#ddd]" />
      <input aria-label="Y" defaultValue="235.136" className="ml-2 w-[75px] h-6 bg-transparent text-[#8a8a8a] outline-none leading-6" />
    </div>
    <svg className="absolute left-[1231px] top-[137px] w-[34px] h-[30px]" viewBox="0 0 34 30" aria-hidden="true">
      <path d="M1 27l6-2 3 0 5-3" fill="none" stroke="#6a3b41" strokeWidth="2" />
      <path d="M9 1l6 2 16 15-4 5L11 8z" fill="#fff" stroke="#111" strokeWidth="1.200" /><path d="M9 1l1 5 4-3zM24 20l4-5M14 6l12 12" stroke="#111" fill="none" />
    </svg>
    <svg className="absolute left-[12px] bottom-[14px] w-[77px] h-[132px]" viewBox="0 0 77 132" fill="none" stroke="#1f47c4" strokeWidth="1.500" aria-label="UCS">
      <path d="M1 1v129h75zM1 118h12v12M2 36l10 10v9M12 46l9-10M45 110l18 18M45 128l18-18" />
    </svg>
    <ImeBar />
    <SpeedWidget />
    <div className="absolute left-[367px] right-[367px] bottom-[2px] h-9 rounded-sm bg-white flex items-center text-black border border-[#777]">
      <div className="w-20 h-full bg-linear-to-b from-[#747474] to-[#444] pl-[9px] flex items-center text-white">
        <span className="h-7 border-l-2 border-dotted border-[#bbb]" />
        <button aria-label="关闭命令行" className="ml-[10px]"><svg className="size-[14px]" viewBox="0 0 14 14"><path d="M1 1l12 12M13 1L1 13" stroke="#fff" strokeWidth="3" /></svg></button>
        <button aria-label="自定义" className="ml-[14px]"><svg className="size-[22px]" viewBox="0 0 22 22"><path d="M2 5l5 3 2-3-3-4c5-1 9 3 7 7l8 9c1 3-3 4-4 3L9 11C5 12 1 9 2 5z" fill="#dcdcdc" /></svg></button>
      </div>
      <svg className="ml-[6px] size-6" viewBox="0 0 24 24" aria-hidden="true"><circle cx="12" cy="12" r="11.500" fill="#fff" stroke="#e3e8ee" /><path d="M12 12l6-7" stroke={B} strokeWidth="1.300" /><path d="M10 11h4v4h-4zM19 4l-1 4-3-3z" fill={B} /></svg>
      <svg className="ml-1 w-2 h-[5px]" viewBox="0 0 8 5" aria-hidden="true"><path d="M0 0h8L4 5z" fill="#777" /></svg>
      <label htmlFor="cmd" className="ml-[10px] flex items-center gap-[9px] leading-6 whitespace-nowrap font-['DejaVu_Sans_Mono','Noto_Sans_CJK_SC',monospace]"><b>CIRCLE</b><span className="text-[20px]">指定圆的圆心或</span><b>:</b></label>
      <input id="cmd" className="flex-1 min-w-0 ml-2 outline-none" />
      <svg className="mr-1 w-[11px] h-[6px]" viewBox="0 0 11 6" aria-hidden="true"><path d="M0 6h11L5.500 0z" fill="#111" /></svg>
    </div>
  </main>
);

interface Cell {
  icon?: string;
  width: string;
  on?: boolean;
  start?: boolean;
}

const STATUS: Cell[] = [
  { icon: 'snap', width: 'w-10', start: true },
  { icon: 'dyn', width: 'w-9', on: true },
  { icon: 'ortho', width: 'w-[38px]' },
  { icon: 'polar', width: 'w-[35px]', on: true },
  { width: 'w-6' },
  { icon: 'iso', width: 'w-[34px]' },
  { width: 'w-6' },
  { icon: 'otrack', width: 'w-9', on: true, start: true },
  { icon: 'osnap', width: 'w-9', on: true, start: true },
  { width: 'w-6' },
  { icon: 'lwt', width: 'w-10', start: true },
  { icon: 'transp', width: 'w-9', on: true },
  { icon: 'cycle', width: 'w-[42px]', start: true },
  { icon: 'annoScale', width: 'w-[38px]', start: true },
  { icon: 'annoVis', width: 'w-9' },
  { icon: 'annoAuto', width: 'w-[38px]' },
  { icon: 'gear', width: 'w-[41px]', start: true },
  { width: 'w-[23px]' },
  { icon: 'plus', width: 'w-[39px]', start: true },
  { icon: 'props', width: 'w-[41px]', start: true },
  { icon: 'lockUi', width: 'w-10', start: true },
  { width: 'w-[22px]' },
  { icon: 'isolate', width: 'w-[41px]', start: true },
  { icon: 'perf', width: 'w-[39px]', on: true, start: true },
  { icon: 'monitor', width: 'w-[50px]', start: true },
  { icon: 'clean', width: 'w-[39px]', start: true },
  { icon: 'menu', width: 'w-[35px]' },
];

const LayoutTab = ({ label, active, width }: { label: string; active?: boolean; width: string }) => (
  <button className={`relative ${width} h-[26px] shrink-0 leading-6 pb-[2px] ${active ? 'font-bold text-white' : 'text-[#a8a8a8]'}`}>
    <svg className="absolute inset-0 size-full" viewBox="0 0 80 24" preserveAspectRatio="none" aria-hidden="true">
      <path d="M0 0h80c-5 2-3 22-9 24H9C3 22 5 2 0 0z" fill={active ? '#7c7c7c' : '#575757'} />
    </svg>
    <span className="relative">{label}</span>
  </button>
);

const StatusBar = () => (
  <footer className="h-[37px] shrink-0 bg-[#383838] border-t-2 border-[#666] flex items-stretch">
    <nav className="flex-1 min-w-0 pl-[14px] flex">
      <LayoutTab label="模型" width="w-[73px]" />
      <LayoutTab label="布局1" width="w-[79px]" active />
      <LayoutTab label="布局2" width="w-[84px]" />
      <button aria-label="新建布局" className="ml-[7px] w-8 h-[22px] rounded-tl-lg rounded-br-lg bg-[#4c4c4c] flex items-center justify-center"><svg className="size-3" viewBox="0 0 12 12"><path d="M4.500 0h3v4.500H12v3H7.500V12h-3V7.500H0v-3h4.500z" fill="#b5b5b5" /></svg></button>
    </nav>
    <div className="shrink-0 flex bg-[#4b4b4b] border-t-2 border-[#757575]">
      <div className="w-[272px] border-x-2 border-[#757575] pr-1 flex items-center justify-end text-[17px] font-medium leading-6">-204.7467, 235.1360, 0.0000</div>
      <button className="w-[50px] border-r-2 border-[#757575] text-[17px] leading-6 font-medium">图纸</button>
      {STATUS.map((c, i) => (
        <button key={i} aria-label={c.icon ?? '更多'} className={`${c.width} flex items-center justify-center ${c.start ? 'border-l-2 border-[#757575]' : ''} ${c.on ? 'bg-[#5b8ac6]' : ''}`}>
          {c.icon ? <Ico name={c.icon} /> : <Arrow big />}
        </button>
      ))}
    </div>
  </footer>
);

export default function App() {
  return (
    <div className="h-screen bg-[#f2f2f2] p-2 overflow-hidden text-white text-[18px] font-['Open_Sans','Noto_Sans_CJK_SC',sans-serif]">
      <div className="h-full flex flex-col bg-[#383838] overflow-hidden shadow-[0_0_6px_2px_#888]">
        <div className="relative shrink-0">
          <div className="pl-[58px]"><TitleBar /></div>
          <nav className="h-8 bg-linear-to-b from-[#a2a2a2] to-[#565656] pl-[60px] pb-[3px] flex items-center border-t border-[#444]">
            {MENUS.map((m) => (
              <button key={m} className="px-4 leading-6 whitespace-nowrap">{m}</button>
            ))}
            <div className="ml-auto mr-[5px] flex items-center gap-2">
              <button aria-label="最小化图形"><svg className="w-4 h-5" viewBox="0 0 16 20"><path d="M0 13h15v4H0z" fill="#2a2a2a" /></svg></button>
              <button aria-label="还原图形"><svg className="w-[18px] h-[17px]" viewBox="0 0 18 17"><path d="M1 6h10v10H1zM6 6V2h11v9h-6" fill="none" stroke="#2a2a2a" strokeWidth="2.200" /></svg></button>
              <button aria-label="关闭图形"><svg className="w-[14px] h-[13px]" viewBox="0 0 14 13"><path d="M1 0l12 13M13 0L1 13" stroke="#2a2a2a" strokeWidth="4" /></svg></button>
            </div>
          </nav>
          <button aria-label="应用程序菜单" className="absolute left-0 top-0 w-[60px] h-[59px] bg-linear-to-b from-[#b4b4b4] to-[#7a7a7a] border-r-2 border-b-2 border-[#1e1e1e] flex items-start">
            <svg className="w-[57px] h-[56px]" viewBox="0 0 57 56" aria-hidden="true">
              <path d="M18 1h9l13 39h-9l-4-11-9-1-5 12H5z" fill="#d8322c" />
              <path d="M18 1h4L11 40H5zM27 1l13 39h-4L23 5z" fill="#a81f1c" />
              <path d="M22 12l4 11h-7z" fill="#999" />
              <path d="M11 27c8-4 16-4 24 0l1 4c-9-4-17-4-26 0z" fill="#ef5b4e" />
              <path d="M44 23h11l-5 8z" fill="#333" />
            </svg>
          </button>
        </div>
        <nav className="h-8 shrink-0 bg-[#535353] border-y-2 border-[#333] pl-[7px] flex items-end leading-6 text-[#d0d0d0]">
          <button className="h-6 w-[62px] mr-[2px] rounded-t-sm border border-b-0 border-[#3a3a3a] bg-linear-to-b from-[#6a6a6a] to-[#5a5a5a] text-white leading-5">默认</button>
          {TABS.map((t) => (
            <button key={t} className="px-[15px] pb-[2px] whitespace-nowrap">{t}</button>
          ))}
          <button className="h-[22px] w-[61px] mb-[3px] ml-[2px] border border-[#3f6a9c] bg-linear-to-b from-[#5c626b] to-[#6b7078] text-white leading-5">布局</button>
          <button aria-label="最小化功能区" className="ml-[35px] mb-[2px] h-6 flex items-center gap-[7px]">
            <svg className="w-[21px] h-[11px]" viewBox="0 0 21 11"><rect width="21" height="11" rx="3" fill="#e9e9ee" /><path d="M6 8h9l-4.500-5z" fill="#333" /></svg>
            <Arrow />
          </button>
        </nav>
        <Ribbon />
        <div className="h-[38px] shrink-0 border-t-2 border-[#858585] bg-[#383838] pl-[22px] flex items-end">
          <div className="relative w-[208px] h-8 pl-[25px] pr-[33px] flex items-center justify-between leading-6">
            <svg className="absolute inset-0 size-full" viewBox="0 0 207 32" preserveAspectRatio="none" aria-hidden="true">
              <defs><linearGradient id="tab" x2="0" y2="1"><stop stopColor="#858585" /><stop offset="1" stopColor="#5c5c5c" /></linearGradient></defs>
              <path d="M0 32C14 30 6 0 20 0h162c14 0 8 30 25 32z" fill="url(#tab)" />
            </svg>
            <span className="relative">Drawing6*</span>
            <button aria-label="关闭 Drawing6" className="relative"><svg className="size-3" viewBox="0 0 12 12"><path d="M1 1l10 10M11 1L1 11" stroke="#4a4a4a" strokeWidth="3" /></svg></button>
          </div>
          <button aria-label="新图形" className="-ml-[3px] mb-1 w-8 h-[22px] rounded-tr-xl rounded-bl-xl border border-[#555] bg-[#4a4a4a] flex items-center justify-center"><svg className="size-3" viewBox="0 0 12 12"><path d="M4.500 0h3v4.500H12v3H7.500V12h-3V7.500H0v-3h4.500z" fill="#c4c4c4" /></svg></button>
        </div>
        <div className="h-[6px] shrink-0 bg-[#555]" />
        <Canvas />
        <StatusBar />
      </div>
    </div>
  );
}
